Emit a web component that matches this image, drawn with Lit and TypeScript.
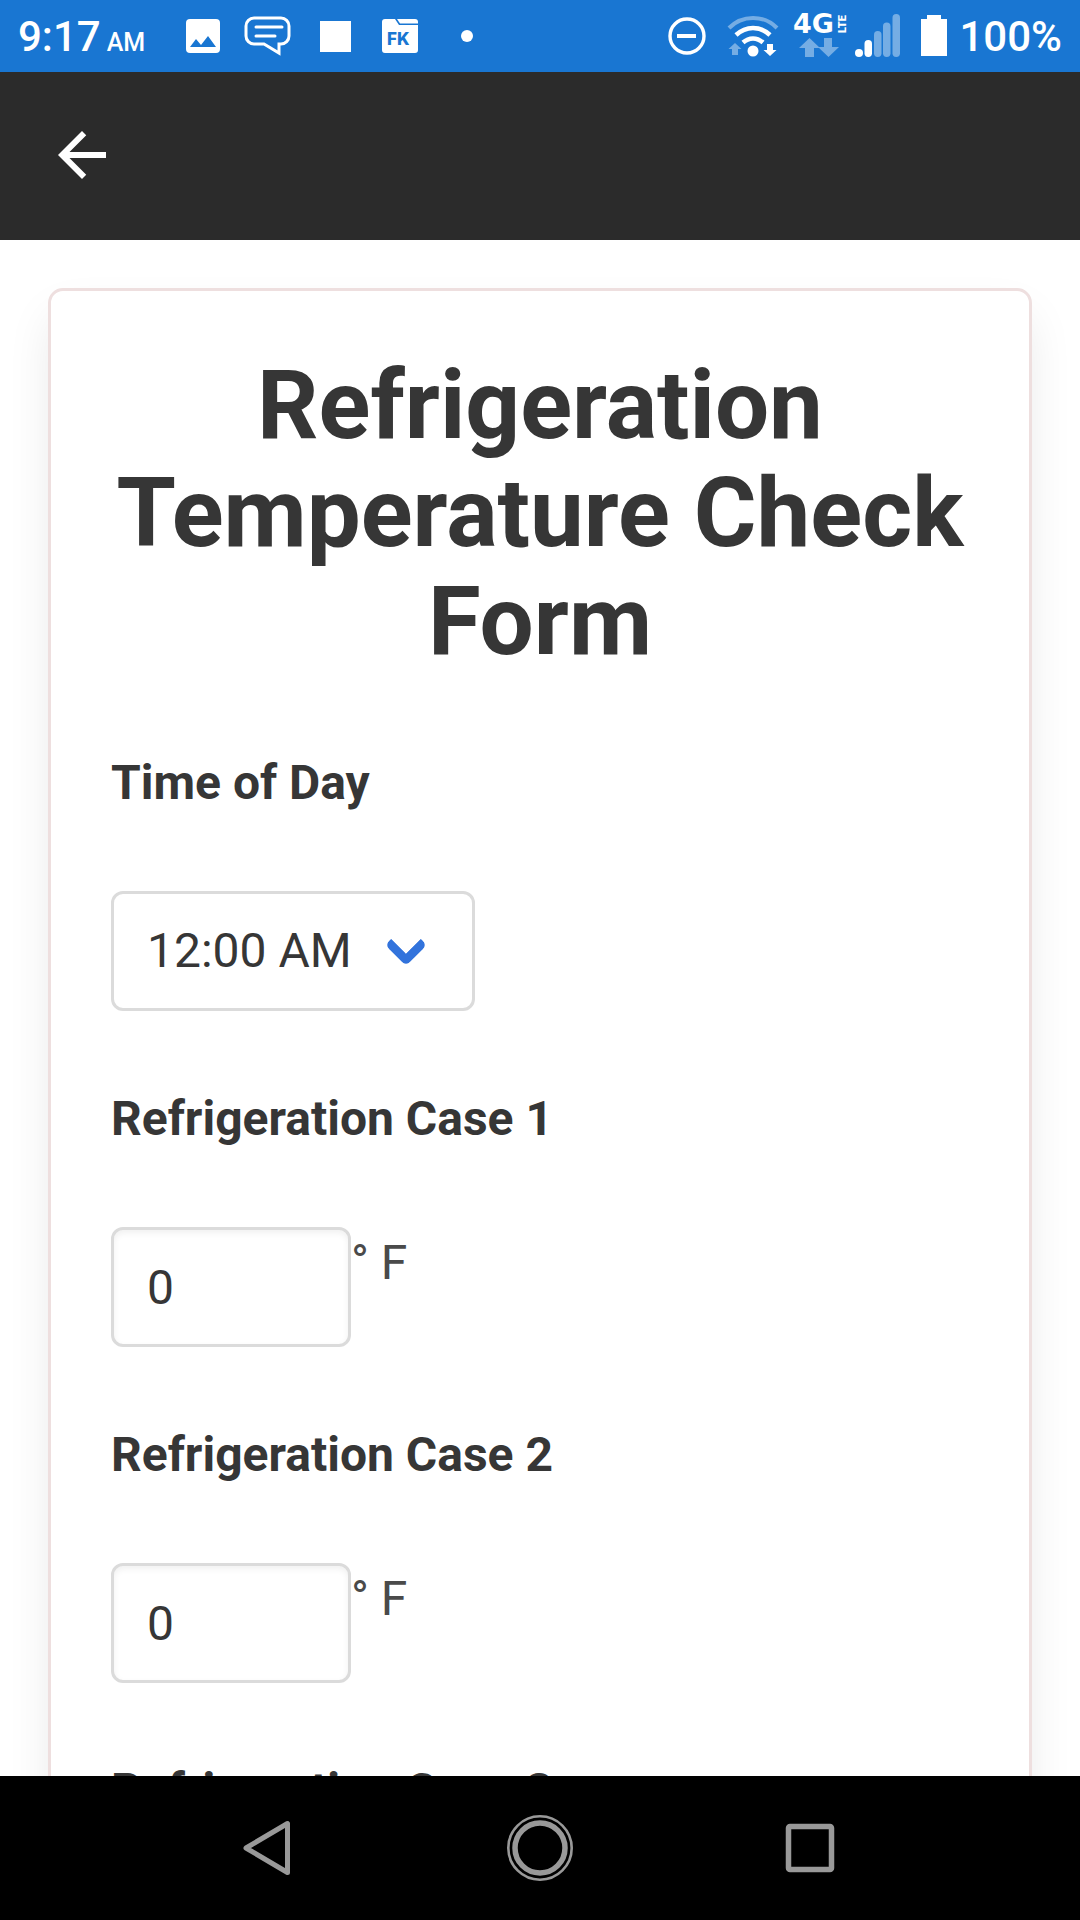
import { LitElement, html, css, svg } from "lit";
import { customElement, state } from "lit/decorators.js";

@customElement("status-bar")
export class StatusBar extends LitElement {
  static styles = css`
    :host {
      display: block;
      flex: none;
    }
    .bar {
      display: flex;
      justify-content: space-between;
      height: 72px;
      padding: 0 18px;
      background: #1976d2;
      color: #fff;
      font-family: Roboto, sans-serif;
      font-weight: 500;
      font-size: 42px;
      line-height: 74px;
    }
    .group {
      display: flex;
    }
    .clock {
      margin-right: 25px;
      white-space: nowrap;
    }
    .meridiem {
      margin-left: 6px;
      font-size: 25px;
    }
    .charge {
      margin-left: 2px;
    }
    .icon {
      display: block;
      flex: none;
      height: 72px;
      fill: #fff;
    }
    .dim {
      fill: #75ade4;
    }
    .line {
      fill: none;
      stroke: #fff;
    }
    .line-dim {
      fill: none;
      stroke: #75ade4;
    }
    .cut {
      fill: #1976d2;
    }
    .folder-mark {
      font: 800 17px Inter, sans-serif;
    }
    .network {
      font: 700 27px "DejaVu Sans", sans-serif;
    }
    .lte {
      font: 900 11px Roboto, sans-serif;
    }
  `;

  private icon(width: number, body: unknown) {
    return html`<svg class="icon" width=${width} height="72" viewBox="0 0 ${width} 72" aria-hidden="true">${body}</svg>`;
  }

  render() {
    return html`
      <div class="bar">
        <div class="group">
          <div class="clock">9:17<span class="meridiem">AM</span></div>
          ${this.icon(66, svg`
            <rect x="16" y="19" width="34" height="34" rx="4"></rect>
            <path class="cut" d="M20 47l6-8 5 6 7-9 8 11z"></path>`)}
          ${this.icon(66, svg`
            <path class="line" stroke-width="3"
              d="M18 18h27a8 8 0 0 1 8 8v10a8 8 0 0 1-8 8h-2v9l-15-9h-10a8 8 0 0 1-8-8v-10a8 8 0 0 1 8-8z"></path>
            <path class="line" stroke-width="3" stroke-linecap="round" d="M20 27h26M20 36h19"></path>`)}
          ${this.icon(66, svg`<rect x="18" y="21" width="31" height="31"></rect>`)}
          ${this.icon(66, svg`
            <path d="M17 19h10l4 6h19v25a3 3 0 0 1-3 3h-30a3 3 0 0 1-3-3v-28a3 3 0 0 1 3-3z"></path>
            <path d="M29 19h18a3 3 0 0 1 3 3v1.500h-18z"></path>
            <text class="cut folder-mark" x="19" y="45">FK</text>`)}
          ${this.icon(66, svg`<circle cx="33" cy="36" r="6"></circle>`)}
        </div>
        <div class="group">
          ${this.icon(60, svg`
            <circle class="line" cx="30" cy="36" r="17" stroke-width="3.4"></circle>
            <rect x="20" y="34" width="19" height="4"></rect>`)}
          ${this.icon(72, svg`
            <path class="line-dim" stroke-width="4" d="M12 28c13-13.500 35-13.500 48 0"></path>
            <path class="line" stroke-width="4.500" d="M19 35c10-9.500 24-9.500 34 0"></path>
            <path class="line" stroke-width="4.500" d="M26 42.500c6-5.500 14-5.500 20 0"></path>
            <circle cx="36" cy="51" r="5.500"></circle>
            <path class="dim" d="M18 43l6.500 6h-3.500v6h-6v-6h-3.500z"></path>
            <path d="M50 44h6v6h3.500l-6.500 6-6.500-6h3.500z"></path>`)}
          ${this.icon(60, svg`
            <text class="network" x="4" y="33">4G</text>
            <text class="lte" transform="translate(57 33) rotate(-90)">LTE</text>
            <path class="dim" d="M20.500 38l10.500 10h-6v9h-9v-9h-6z"></path>
            <path class="dim" d="M35 38h8v9h7l-10.500 10-10.500-10h6z"></path>`)}
          ${this.icon(60, svg`
            <circle cx="10" cy="53" r="4"></circle>
            <rect x="15.500" y="40" width="7.500" height="17" rx="3.700"></rect>
            <rect class="dim" x="25" y="31" width="7.500" height="26" rx="3.700"></rect>
            <rect class="dim" x="34" y="22.500" width="7.500" height="34.500" rx="3.700"></rect>
            <rect class="dim" x="43.500" y="14" width="7.500" height="43" rx="3.700"></rect>`)}
          ${this.icon(48, svg`<path d="M18 15h14v4h6v37h-26v-37h6z"></path>`)}
          <div class="charge">100%</div>
        </div>
      </div>
    `;
  }
}

@customElement("app-header")
export class AppHeader extends LitElement {
  static styles = css`
    :host {
      display: block;
      flex: none;
    }
    .bar {
      display: flex;
      align-items: center;
      box-sizing: border-box;
      height: 168px;
      padding: 0 46px 2px;
      background: #2b2b2b;
    }
    .back {
      display: block;
      padding: 0;
      border: 0;
      background: none;
      cursor: pointer;
    }
    .arrow {
      display: block;
      fill: #fff;
    }
  `;

  render() {
    return html`
      <header class="bar">
        <button class="back" type="button" aria-label="Back">
          <svg class="arrow" width="72" height="72" viewBox="0 0 24 24">
            <path d="M20 11H7.830l5.590-5.590L12 4l-8 8 8 8 1.410-1.410L7.830 13H20v-2z"></path>
          </svg>
        </button>
      </header>
    `;
  }
}

@customElement("temperature-form")
export class TemperatureForm extends LitElement {
  static styles = css`
    :host {
      display: block;
      padding: 48px;
      font-family: Roboto, sans-serif;
      font-size: 48px;
      line-height: 72px;
      color: #4a4a4a;
    }
    .card {
      display: flex;
      flex-direction: column;
      gap: 72px;
      padding: 60px;
      border: 3px solid #eedfdf;
      border-radius: 15px;
      background: #fff;
      box-shadow: 0 24px 48px -6px rgba(10, 10, 10, 0.1);
    }
    .title {
      margin: 0;
      color: #363636;
      font-size: 96px;
      font-weight: 700;
      line-height: 108px;
      text-align: center;
    }
    .field {
      display: flex;
      flex-direction: column;
      align-items: flex-start;
      gap: 72px;
    }
    .label {
      color: #363636;
      font-weight: 700;
    }
    .reading {
      display: flex;
      align-items: flex-start;
    }
    .control {
      box-sizing: border-box;
      display: block;
      height: 120px;
      margin: 0;
      padding: 0 33px;
      border: 3px solid #dbdbdb;
      border-radius: 12px;
      outline: none;
      background: #fff;
      color: #363636;
      font: inherit;
      appearance: none;
    }
    .control:focus {
      border-color: #3273dc;
    }
    .number {
      width: 240px;
      box-shadow: inset 0 3px 6px rgba(10, 10, 10, 0.06);
    }
    .select {
      position: relative;
    }
    .time {
      padding-right: 120px;
    }
    .select::after {
      content: "";
      position: absolute;
      top: 50%;
      right: 54px;
      box-sizing: border-box;
      width: 30px;
      height: 30px;
      margin-top: -21px;
      border: 9px solid #3273dc;
      border-top: 0;
      border-right: 0;
      border-radius: 6px;
      transform: rotate(-45deg);
      pointer-events: none;
    }
  `;

  @state() private times = ["12:00 AM", "1:00 AM", "2:00 AM", "3:00 AM"];
  @state() private cases = [1, 2, 3];

  render() {
    return html`
      <form class="card">
        <h1 class="title">Refrigeration Temperature Check Form</h1>
        <div class="field">
          <label class="label" for="time">Time of Day</label>
          <div class="select">
            <select class="control time" id="time">
              ${this.times.map((time) => html`<option>${time}</option>`)}
            </select>
          </div>
        </div>
        ${this.cases.map(
          (n) => html`
            <div class="field">
              <label class="label" for="case-${n}">Refrigeration Case ${n}</label>
              <div class="reading">
                <input class="control number" id="case-${n}" type="text" inputmode="decimal" value="0" />
                <span>° F</span>
              </div>
            </div>
          `
        )}
      </form>
    `;
  }
}

@customElement("navigation-bar")
export class NavigationBar extends LitElement {
  static styles = css`
    :host {
      display: block;
      flex: none;
    }
    .bar {
      display: flex;
      justify-content: center;
      height: 144px;
      background: #000;
    }
    .key {
      display: flex;
      align-items: center;
      justify-content: center;
      width: 25%;
      padding: 0;
      border: 0;
      background: none;
      cursor: pointer;
    }
    .glyph {
      fill: none;
      stroke: #999;
      stroke-linejoin: round;
    }
  `;

  private key(name: string, body: unknown) {
    return html`
      <button class="key" type="button" aria-label=${name}>
        <svg class="glyph" width="72" height="72" viewBox="0 0 72 72">${body}</svg>
      </button>
    `;
  }

  render() {
    return html`
      <nav class="bar">
        ${this.key("Back", svg`<path stroke-width="5" d="M53.500 11.500v49l-41.500-24.500z"></path>`)}
        ${this.key("Home", svg`
          <circle cx="36" cy="36" r="31.700" stroke-width="2.600"></circle>
          <circle cx="36" cy="36" r="25" stroke-width="5.500"></circle>`)}
        ${this.key("Overview", svg`<rect x="14.500" y="14.500" width="43" height="43" rx="1.500" stroke-width="5.500"></rect>`)}
      </nav>
    `;
  }
}

@customElement("app-root")
export class AppRoot extends LitElement {
  static styles = css`
    :host {
      display: flex;
      flex-direction: column;
      height: 100vh;
      background: #fff;
    }
    .content {
      flex: 1;
      min-height: 0;
      overflow-x: hidden;
      overflow-y: auto;
      scrollbar-width: none;
    }
  `;

  render() {
    return html`
      <status-bar></status-bar>
      <app-header></app-header>
      <main class="content"><temperature-form></temperature-form></main>
      <navigation-bar></navigation-bar>
    `;
  }
}
